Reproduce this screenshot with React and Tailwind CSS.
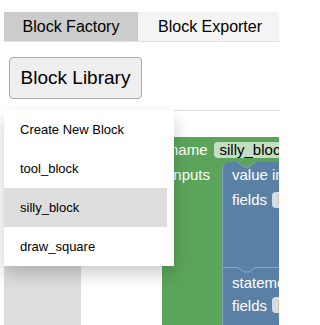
import React from "react";

const menuItems = ["Create New Block", "tool_block", "silly_block", "draw_square"];

function Notch({ fill, stroke }) {
  // previous-connection notch cut into the top edge of a block
  return (
    <svg className="absolute left-[15px] top-0" width="17" height="6" viewBox="0 0 17 6">
      <path d="M0 0 L6 4.5 L11 4.5 L17 0 Z" fill={fill} />
      <path d="M0 0.5 L6 5 L11 5 L17 0.5" fill="none" stroke={stroke} strokeWidth="1" />
    </svg>
  );
}

function Field({ children, bg }) {
  return (
    <span className={`ml-[5px] h-[16px] flex items-center px-[6px] rounded-[4px] text-black whitespace-nowrap ${bg}`}>
      {children}
    </span>
  );
}

function GreenBlock() {
  return (
    <div className="w-[117px] overflow-hidden bg-[#5ba55b] text-white text-[15px] leading-[17px]">
      <div className="h-[25px] flex items-center pl-2">
        <span>name</span>
        <span className="ml-[1px]">
          <Field bg="bg-[#c3dfc3]">silly_block</Field>
        </span>
      </div>
      <div className="flex">
        <div className="w-[60px] shrink-0 pl-2 pt-[4px]">inputs</div>
        <div className="w-[120px] shrink-0 flex flex-col">
          <div className="relative h-[105px] bg-[#5b80a5] rounded-tl-[8px] border-l border-[#86a1bd]">
            <Notch fill="#5ba55b" stroke="#86a1bd" />
            <div className="h-[25px] flex items-center pl-[9px] whitespace-nowrap">value input</div>
            <div className="h-[25px] flex items-center pl-[9px] whitespace-nowrap">
              fields
              <Field bg="bg-[#d5dde7]">left</Field>
            </div>
          </div>
          <div className="relative h-[60px] bg-[#5b80a5] border-l border-[#86a1bd] pt-[3px]">
            <svg className="absolute left-0 top-0" width="120" height="6" viewBox="0 0 120 6">
              <path d="M0 0.5 L15 0.5 L21 5 L26 5 L32 0.5 L120 0.5" fill="none" stroke="#8ea8c2" strokeWidth="1" />
            </svg>
            <div className="h-[24px] flex items-center pl-[9px] whitespace-nowrap">statement input</div>
            <div className="h-[22px] flex items-center pl-[9px] whitespace-nowrap">
              fields
              <Field bg="bg-[#d5dde7]">left</Field>
            </div>
          </div>
        </div>
      </div>
    </div>
  );
}

export default function App() {
  return (
    <div className="relative w-[279px] h-[325px] overflow-hidden bg-white font-['Liberation_Sans',Arial,sans-serif]">
      <div className="ml-1 mt-3 flex border-b border-[#e2e2e2]">
        <button className="w-[134px] h-[29px] bg-[#ccc] text-[16px] text-black">Block Factory</button>
        <button className="flex-1 h-[29px] bg-[#f4f4f4] text-[16px] text-black whitespace-nowrap pl-[20px] text-left">
          Block Exporter
        </button>
      </div>

      <div className="relative ml-[9px] mt-[15px]">
        <button className="w-[133px] h-[42px] bg-[#eee] border border-[#aaa] rounded-[4px] text-[19px] text-black">
          Block Library
        </button>
        <div className="absolute left-[-5px] top-[53px] z-10 w-[170px] bg-white flex shadow-[0_8px_16px_0_rgba(0,0,0,0.2)]">
          <ul className="w-[163px]">
            {menuItems.map((item) => (
              <li
                key={item}
                className={`h-[39px] flex items-center pl-4 text-[13px] text-black ${item === "silly_block" ? "bg-[#ddd]" : ""}`}
              >
                {item}
              </li>
            ))}
          </ul>
        </div>
      </div>

      <div className="ml-1 mt-[11px] h-[215px] border-t border-[#ddd] flex">
        <div className="w-[77px] shrink-0 bg-[#ddd]" />
        <div className="flex-1 overflow-hidden pt-[26px] pl-[81px]">
          <GreenBlock />
        </div>
      </div>
    </div>
  );
}
